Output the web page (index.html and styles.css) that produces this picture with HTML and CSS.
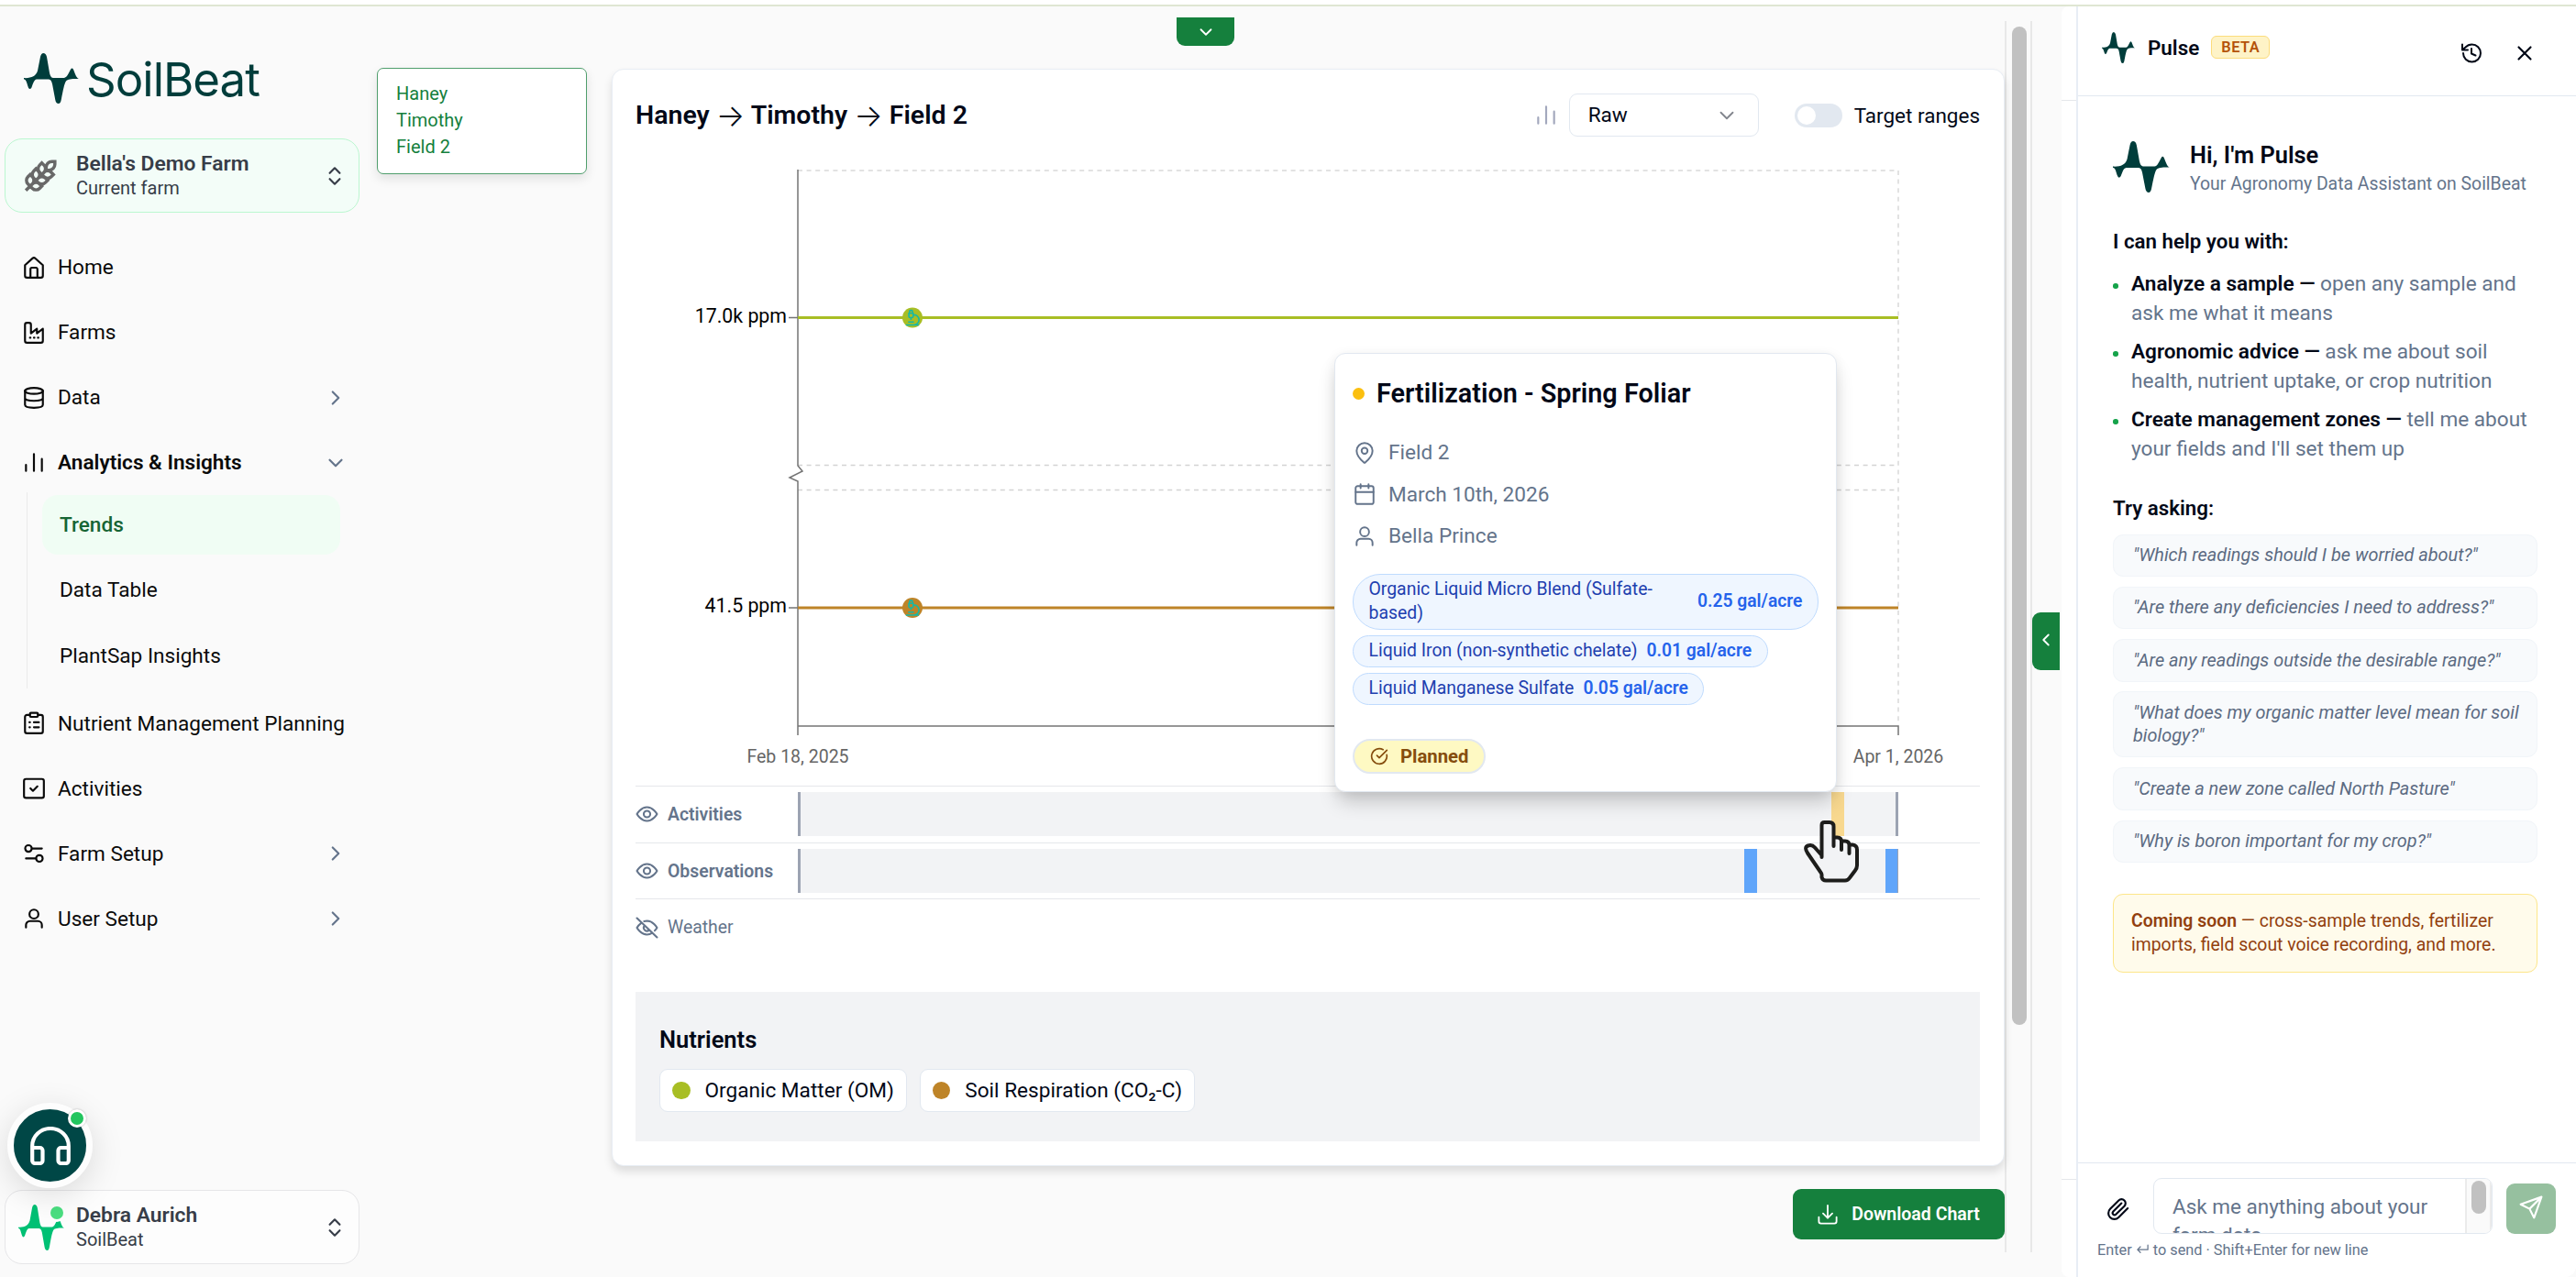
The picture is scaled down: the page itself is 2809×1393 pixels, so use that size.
FILE: index.html
```html
<!DOCTYPE html>
<html lang="en">
<head>
    <meta charset="UTF-8">
    <meta name="viewport" content="width=device-width, initial-scale=1.0">
    <title>SoilBeat - Trends</title>
    <link rel="stylesheet" href="styles.css">
</head>
<body>
    <!-- Shared shapes -->
    <svg class="defs" width="0" height="0">
        <symbol id="wave" viewBox="0 0 60 54" preserveAspectRatio="none">
            <path fill="currentColor" d="M0 26.6C8 27 13 25 15 19L18 4Q19 0 21.3 0Q24 0 25 4L28 21C29 25 30 26.5 33 26.5L44 26.5C47 26 48 23 51 17.5Q52.5 15 54 17.5C56 22 57 26.5 60 27.6C54 27.5 48 27.5 46 30C44 33 43 39 40.7 50Q40 54 37.8 54Q35 54 34.3 50L31 33C30 29 29 28 26 28L14 28C11 28.5 10 33 8.3 37Q6.5 39.5 5 37C3 32 3 28.5 0 27.8Z"/>
        </symbol>
        <symbol id="chevron-right" viewBox="0 0 24 24"><path d="m9 18 6-6-6-6"/></symbol>
        <symbol id="chevron-left" viewBox="0 0 24 24"><path d="m15 18-6-6 6-6"/></symbol>
        <symbol id="chevron-down" viewBox="0 0 24 24"><path d="m6 9 6 6 6-6"/></symbol>
        <symbol id="chevrons" viewBox="0 0 24 24"><path d="m7 15 5 5 5-5M7 9l5-5 5 5"/></symbol>
        <symbol id="bars" viewBox="0 0 24 24"><path d="M4 20v-6M12 20V3M20 20V8"/></symbol>
        <symbol id="user" viewBox="0 0 24 24"><circle cx="12" cy="7.5" r="4.5"/><path d="M4 21v-2.5a4 4 0 0 1 4-4h8a4 4 0 0 1 4 4V21"/></symbol>
        <symbol id="eye" viewBox="0 0 24 24"><path d="M1.500 12S5.500 4.800 12 4.800 22.500 12 22.500 12 18.500 19.200 12 19.200 1.500 12 1.500 12z"/><circle cx="12" cy="12" r="3.400"/></symbol>
        <symbol id="eye-off" viewBox="0 0 24 24"><path d="M9 5.300a11 11 0 0 1 3-.5C18.500 4.800 22.500 12 22.500 12a17 17 0 0 1-2.300 3M6 7A17 17 0 0 0 1.500 12S5.500 19.200 12 19.200a10 10 0 0 0 5.500-1.700M9.500 9.700a3.400 3.400 0 0 0 4.800 4.800M1.500 2 22.500 22"/></symbol>
        <symbol id="microscope" viewBox="0 0 24 24"><path d="M6 18h8M3 22h18M14 22a7 7 0 1 0 0-14h-1M9 14h2M9 12a2 2 0 0 1-2-2V6h6v4a2 2 0 0 1-2 2ZM12 6V3a1 1 0 0 0-1-1H9a1 1 0 0 0-1 1v3"/></symbol>
    </svg>

    <div class="app">
        <!-- Sidebar -->
        <aside class="sidebar">
            <div class="logo">
                <svg class="logo-mark"><use href="#wave"/></svg>
                <span class="logo-text">SoilBeat</span>
            </div>

            <div class="account farm">
                <svg class="wheat" viewBox="0 0 24 24"><path d="M2 22 16 8M3.500 12.500 5 11l1.500 1.500a3.500 3.500 0 0 1 0 5L5 19l-1.500-1.500a3.500 3.500 0 0 1 0-5ZM7.500 8.500 9 7l1.500 1.500a3.500 3.500 0 0 1 0 5L9 15l-1.500-1.500a3.500 3.500 0 0 1 0-5ZM11.500 4.500 13 3l1.500 1.500a3.500 3.500 0 0 1 0 5L13 11l-1.500-1.500a3.500 3.500 0 0 1 0-5ZM20 2h2v2a4 4 0 0 1-4 4h-2V6a4 4 0 0 1 4-4ZM11.500 17.500 13 19l-1.500 1.500a3.500 3.500 0 0 1-5 0L5 19l1.500-1.500a3.500 3.500 0 0 1 5 0ZM15.500 13.500 17 15l-1.500 1.500a3.500 3.500 0 0 1-5 0L9 15l1.500-1.500a3.500 3.500 0 0 1 5 0ZM19.500 9.500 21 11l-1.500 1.500a3.500 3.500 0 0 1-5 0L13 11l1.500-1.500a3.500 3.500 0 0 1 5 0Z"/></svg>
                <div class="account-text">
                    <strong>Bella's Demo Farm</strong>
                    <span>Current farm</span>
                </div>
                <svg class="icon chevrons"><use href="#chevrons"/></svg>
            </div>

            <nav class="nav">
                <a class="nav-item"><svg class="icon" viewBox="0 0 24 24"><path d="M3 9.500 10.500 2.700a2.200 2.200 0 0 1 3 0L21 9.500V20a2 2 0 0 1-2 2H5a2 2 0 0 1-2-2ZM8.500 22v-8.500a1.500 1.500 0 0 1 1.500-1.500h4a1.500 1.500 0 0 1 1.500 1.500V22"/></svg>Home</a>
                <a class="nav-item"><svg class="icon" viewBox="0 0 24 24"><path d="M3 20a2 2 0 0 0 2 2h14a2 2 0 0 0 2-2V8l-6 4.500V8l-6 4.500V4a2 2 0 0 0-2-2H5a2 2 0 0 0-2 2ZM8 17h.5M12 17h.5M16 17h.5"/></svg>Farms</a>
                <a class="nav-item"><svg class="icon" viewBox="0 0 24 24"><ellipse cx="12" cy="5" rx="9" ry="3"/><path d="M3 5v14c0 4 18 4 18 0V5M3 12c0 4 18 4 18 0"/></svg>Data<svg class="icon arrow"><use href="#chevron-right"/></svg></a>
                <a class="nav-item open"><svg class="icon"><use href="#bars"/></svg>Analytics &amp; Insights<svg class="icon arrow"><use href="#chevron-down"/></svg></a>
                <div class="subnav">
                    <a class="sub-item active">Trends</a>
                    <a class="sub-item">Data Table</a>
                    <a class="sub-item">PlantSap Insights</a>
                </div>
                <a class="nav-item"><svg class="icon" viewBox="0 0 24 24"><rect x="8" y="1.500" width="8" height="4" rx="1"/><path d="M16 3.500h3a2 2 0 0 1 2 2V20a2 2 0 0 1-2 2H5a2 2 0 0 1-2-2V5.500a2 2 0 0 1 2-2h3M12 11h5M12 16h5M7.500 11h.5M7.500 16h.5"/></svg>Nutrient Management Planning</a>
                <a class="nav-item"><svg class="icon" viewBox="0 0 24 24"><rect x="2" y="2.500" width="20" height="19" rx="2"/><path d="m8.500 12 2.500 2.500 4.500-4.500"/></svg>Activities</a>
                <a class="nav-item"><svg class="icon" viewBox="0 0 24 24"><path d="M10 7h10M4 17h10"/><circle cx="6.500" cy="7" r="3.300"/><circle cx="17.500" cy="17" r="3.300"/></svg>Farm Setup<svg class="icon arrow"><use href="#chevron-right"/></svg></a>
                <a class="nav-item"><svg class="icon"><use href="#user"/></svg>User Setup<svg class="icon arrow"><use href="#chevron-right"/></svg></a>
            </nav>

            <div class="account profile">
                <div class="avatar">
                    <svg><use href="#wave"/></svg>
                    <span class="avatar-dot"></span>
                </div>
                <div class="account-text">
                    <strong>Debra Aurich</strong>
                    <span>SoilBeat</span>
                </div>
                <svg class="icon chevrons"><use href="#chevrons"/></svg>
            </div>

            <!-- Support button -->
            <div class="support">
                <svg viewBox="0 0 44 42"><path d="M2.200 37V21a19.800 19 0 0 1 39.600 0v16M2.200 23h8.300a3 3 0 0 1 3 3v11a3 3 0 0 1-3 3H5a3 3 0 0 1-2.800-3ZM41.800 23h-8.300a3 3 0 0 0-3 3v11a3 3 0 0 0 3 3H39a3 3 0 0 0 2.800-3Z"/></svg>
                <span class="support-dot"></span>
            </div>
        </aside>

        <!-- Selected path -->
        <div class="path-box">
            <div>Haney</div>
            <div>Timothy</div>
            <div>Field 2</div>
        </div>

        <main class="main">
            <button class="tab-down"><svg class="icon"><use href="#chevron-down"/></svg></button>

            <section class="card">
                <header class="card-header">
                    <h1>Haney <span class="to">→</span> Timothy <span class="to">→</span> Field 2</h1>
                    <svg class="icon bars-icon"><use href="#bars"/></svg>
                    <div class="select">Raw<svg class="icon"><use href="#chevron-down"/></svg></div>
                    <span class="toggle"></span>
                    <span class="toggle-label">Target ranges</span>
                </header>

                <svg class="chart" viewBox="693 160 1466 697">
                    <g class="grid">
                        <path class="dash-light" d="M870 186H2070"/>
                        <path d="M2070 186V791"/>
                        <path d="M870 507.500H2070M870 534.500H2070"/>
                    </g>
                    <path class="axis" d="M870 185V508L875 514 861 521 870 525V802M870 792H2070V802M860 346.500H870M860 663H870"/>
                    <path class="line-om" d="M870 346.500H2070"/>
                    <path class="line-resp" d="M870 663H2070"/>
                    <circle class="dot-om" cx="995" cy="346.500" r="11"/>
                    <circle class="dot-resp" cx="995" cy="663" r="11"/>
                    <use class="micro" href="#microscope" x="985.500" y="337" width="19" height="19"/>
                    <use class="micro" href="#microscope" x="985.500" y="653.500" width="19" height="19"/>
                    <text class="y-label" x="858" y="351.500">17.0k ppm</text>
                    <text class="y-label" x="858" y="668">41.5 ppm</text>
                    <text class="x-label" x="870" y="831.500">Feb 18, 2025</text>
                    <text class="x-label" x="2070" y="831.500">Apr 1, 2026</text>
                </svg>

                <div class="track on">
                    <svg class="icon"><use href="#eye"/></svg>
                    <span class="track-name">Activities</span>
                    <div class="bar ends"><i class="mark yellow"></i></div>
                </div>
                <div class="track on">
                    <svg class="icon"><use href="#eye"/></svg>
                    <span class="track-name">Observations</span>
                    <div class="bar ends"><i class="mark blue first"></i><i class="mark blue last"></i></div>
                </div>
                <div class="track">
                    <svg class="icon"><use href="#eye-off"/></svg>
                    <span class="track-name">Weather</span>
                </div>

                <div class="nutrients">
                    <h2>Nutrients</h2>
                    <div class="chips">
                        <span class="chip"><i class="om"></i>Organic Matter (OM)</span>
                        <span class="chip"><i class="resp"></i>Soil Respiration (CO₂-C)</span>
                    </div>
                </div>

                <!-- Activity details -->
                <div class="popover">
                    <h3><i></i>Fertilization - Spring Foliar</h3>
                    <div class="info"><svg class="icon" viewBox="0 0 24 24"><path d="M20 10c0 5-5.500 10.200-7.400 11.800a1 1 0 0 1-1.200 0C9.500 20.200 4 15 4 10a8 8 0 0 1 16 0"/><circle cx="12" cy="10" r="3"/></svg>Field 2</div>
                    <div class="info"><svg class="icon" viewBox="0 0 24 24"><rect x="3" y="4" width="18" height="18" rx="2"/><path d="M8 2v4M16 2v4M3 10h18"/></svg>March 10th, 2026</div>
                    <div class="info"><svg class="icon"><use href="#user"/></svg>Bella Prince</div>
                    <div class="products">
                        <div class="product"><span>Organic Liquid Micro Blend (Sulfate-based)</span><b>0.25 gal/acre</b></div>
                        <div class="product"><span>Liquid Iron (non-synthetic chelate)</span><b>0.01 gal/acre</b></div>
                        <div class="product"><span>Liquid Manganese Sulfate</span><b>0.05 gal/acre</b></div>
                    </div>
                    <span class="status"><svg class="icon" viewBox="0 0 24 24"><path d="M21.800 10A10 10 0 1 1 17 3.300M9 11l3 3L22 4"/></svg>Planned</span>
                </div>

                <svg class="pointer" viewBox="0 0 60 68"><path d="M19.500 40V5Q19.500 2 22.500 2H28Q32.500 2 32.500 6.500V28V18.500H36.500Q41 18.500 41 23V32V22.500H45Q49.500 22.500 49.500 27V36V26.500H53Q58 27 58 32V49Q58 52 56 54.500L50 62.500Q48 65.500 45 65.500H24Q20.500 65.500 19.500 62V59Q19.500 58 18 56L4 35.500Q0 29 4.500 27.500Q9 26 12 29.500L19.500 38"/></svg>
            </section>

            <button class="download"><svg class="icon" viewBox="0 0 24 24"><path d="M1.500 15v5a2.500 2.500 0 0 0 2.500 2.500h16a2.500 2.500 0 0 0 2.500-2.500v-5M6.500 10.500 12 16l5.500-5.500M12 16V1"/></svg>Download Chart</button>
        </main>

        <div class="scrollbar"><span></span></div>
        <div class="gutter"><button class="tab-left"><svg class="icon"><use href="#chevron-left"/></svg></button></div>
        <div class="drawer-edge"><span></span></div>

        <!-- Assistant panel -->
        <aside class="pulse">
            <header class="pulse-header">
                <svg class="pulse-mark"><use href="#wave"/></svg>
                <span class="pulse-name">Pulse</span>
                <span class="beta">BETA</span>
                <svg class="icon history" viewBox="0 0 24 24"><path d="M3 12a9.500 9.500 0 1 0 9.500-9.500A10 10 0 0 0 5.500 5.500L2 8.500M2 2.500v6h6M12 7v5.500l4.500 2"/></svg>
                <svg class="icon close" viewBox="0 0 24 24"><path d="M18 6 6 18M6 6l12 12"/></svg>
            </header>

            <div class="pulse-body">
                <div class="hello">
                    <svg><use href="#wave"/></svg>
                    <div>
                        <h2>Hi, I'm Pulse</h2>
                        <p>Your Agronomy Data Assistant on SoilBeat</p>
                    </div>
                </div>
                <h4>I can help you with:</h4>
                <ul class="skills">
                    <li><b>Analyze a sample —</b> open any sample and ask me what it means</li>
                    <li><b>Agronomic advice —</b> ask me about soil health, nutrient uptake, or crop nutrition</li>
                    <li><b>Create management zones —</b> tell me about your fields and I'll set them up</li>
                </ul>
                <h4>Try asking:</h4>
                <div class="prompts">
                    <div>"Which readings should I be worried about?"</div>
                    <div>"Are there any deficiencies I need to address?"</div>
                    <div>"Are any readings outside the desirable range?"</div>
                    <div>"What does my organic matter level mean for soil biology?"</div>
                    <div>"Create a new zone called North Pasture"</div>
                    <div>"Why is boron important for my crop?"</div>
                </div>
                <div class="soon"><b>Coming soon</b> — cross-sample trends, fertilizer imports, field scout voice recording, and more.</div>
            </div>

            <footer class="pulse-footer">
                <div class="composer">
                    <svg class="icon clip" viewBox="0 0 24 24"><path d="m21.400 11.100-9.200 9.200a6 6 0 0 1-8.500-8.500l8.600-8.600a4 4 0 1 1 5.700 5.700l-8.600 8.500a2 2 0 0 1-2.800-2.800l8.500-8.500"/></svg>
                    <div class="ask">
                        <div class="ask-text">Ask me anything about your farm data</div>
                        <div class="ask-scroll"><span></span></div>
                    </div>
                    <button class="send"><svg class="icon" viewBox="0 0 24 24"><path d="M22.500 1.500 1.500 9l9 4.500L15 22.500ZM22.500 1.500l-12 12"/></svg></button>
                </div>
                <p class="hint">Enter <svg class="icon" viewBox="0 0 24 24"><path d="M21 5v8H3M8 8l-5 5 5 5"/></svg> to send · Shift+Enter for new line</p>
            </footer>
        </aside>
    </div>
</body>
</html>
```

FILE: styles.css
```css
* {
    box-sizing: border-box;
}

body {
    margin: 0;
    font-family: Roboto, "Liberation Sans", sans-serif;
    font-size: 22.6px;
    color: #020817;
    background-color: #fff;
    overflow: hidden;
}

h1, h2, h3, h4, p, ul {
    margin: 0;
    padding: 0;
    font-weight: 600;
}

button {
    border: none;
    padding: 0;
    font-family: inherit;
    color: #fff;
    background-color: #15803d;
}

.defs {
    display: block;
}

.icon {
    width: 26px;
    height: 26px;
    flex: none;
    fill: none;
    stroke: currentColor;
    stroke-width: 2;
    stroke-linecap: round;
    stroke-linejoin: round;
}

.app {
    display: flex;
    height: 1388px;
    margin-top: 5px;
    border-top: 2px solid #dfe6d3;
    background-color: #fafafa;
}

/* Sidebar */
.sidebar {
    position: relative;
    width: 411px;
    flex: none;
    padding: 0 19px 0 5px;
    display: flex;
    flex-direction: column;
}

.logo {
    height: 144px;
    padding: 51px 0 0 21px;
    display: flex;
    color: #003d3b;
}

.logo-mark {
    width: 60px;
    height: 55px;
}

.logo-text {
    margin-left: 8px;
    font-family: Inter, sans-serif;
    font-size: 51px;
    line-height: 57px;
    letter-spacing: -1px;
}

.account {
    width: 387px;
    height: 81px;
    flex: none;
    display: flex;
    align-items: center;
    border: 1px solid #e6e6e8;
    border-radius: 19px;
    background-color: #fdfdfd;
    color: #373d48;
}

.farm {
    border-color: #bbf7d0;
    background-color: #f3fdf8;
}

.wheat {
    width: 38px;
    height: 38px;
    margin: 0 20px 0 19px;
    fill: none;
    stroke: #686868;
    stroke-width: 2.2;
}

.account-text {
    flex: 1;
    display: flex;
    flex-direction: column;
    padding-top: 1px;
    line-height: 26px;
}

.account-text strong {
    font-weight: 600;
    font-size: 22.8px;
}

.account-text span {
    font-size: 20px;
}

.chevrons {
    margin-right: 13px;
}

.nav {
    margin-top: 27px;
    flex: 1;
    display: flex;
    flex-direction: column;
    gap: 6.1px;
    color: #0a0a0a;
}

.nav-item {
    height: 65px;
    flex: none;
    padding: 0 13px 0 19px;
    display: flex;
    align-items: center;
    gap: 13px;
    white-space: nowrap;
}

.nav-item.open {
    font-weight: 600;
    margin-bottom: -6px;
}

.arrow {
    margin-left: auto;
    color: #64748b;
}

.subnav {
    margin-left: 24px;
    width: 342px;
    padding: 3px 0 3px 16px;
    border-left: 1.5px solid #ebebeb;
    display: flex;
    flex-direction: column;
    gap: 6.1px;
}

.sub-item {
    height: 65px;
    padding-left: 19px;
    line-height: 65px;
    border-radius: 17px;
}

.sub-item.active {
    background-color: #f0fdf4;
    color: #166534;
    font-weight: 500;
}

.profile {
    margin-bottom: 14px;
}

.avatar {
    position: relative;
    width: 50px;
    height: 50px;
    margin: 0 13px 0 14px;
    color: #00c074;
}

.avatar svg {
    width: 50px;
    height: 50px;
}

.avatar-dot {
    position: absolute;
    top: 2px;
    right: 1px;
    width: 14px;
    height: 14px;
    border-radius: 50%;
    background-color: #4ade80;
    box-shadow: 0 0 0 3px #fdfdfd;
}

.support {
    position: absolute;
    left: 8px;
    top: 1196px;
    width: 93px;
    height: 93px;
    border: 7.5px solid #fdfdfd;
    border-radius: 50%;
    background-color: #004746;
    box-shadow: 0 8px 36px rgba(0, 0, 0, 0.13);
    display: flex;
    align-items: center;
    justify-content: center;
}

.support svg {
    width: 44px;
    height: 42px;
    fill: none;
    stroke: #fff;
    stroke-width: 4.2;
}

.support-dot {
    position: absolute;
    top: 0;
    right: 0;
    width: 20px;
    height: 20px;
    border: 3px solid #fff;
    border-radius: 50%;
    background-color: #22c55e;
    box-shadow: 0 0 2px rgba(0, 0, 0, 0.3);
}

.path-box {
    width: 229px;
    height: 116px;
    margin-top: 67px;
    padding: 13px 20px;
    border: 1.5px solid #4f9e6c;
    border-radius: 7px;
    background-color: #fff;
    box-shadow: 0 5px 12px rgba(0, 0, 0, 0.1);
    color: #15803d;
    font-size: 20px;
    line-height: 29.2px;
}

/* Main column */
.main {
    position: relative;
    width: 1519px;
    flex: none;
    margin-left: 27px;
    padding-top: 68px;
}

.tab-down {
    position: absolute;
    left: 616px;
    top: 12px;
    width: 63px;
    height: 31px;
    border-radius: 0 0 9px 9px;
}

.tab-down .icon {
    width: 22px;
    height: 22px;
    margin-top: 3px;
}

.card {
    position: relative;
    height: 1197px;
    padding: 26px 26px 0 25px;
    border: 1.5px solid #e8edf4;
    border-radius: 13px;
    background-color: #fff;
    box-shadow: 0 6px 10px rgba(0, 0, 0, 0.12);
}

.card-header {
    display: flex;
    align-items: center;
    height: 47px;
}

h1 {
    margin: 0 auto 0 0;
    font-size: 28.5px;
    line-height: 40px;
}

.to {
    font-family: Inter, sans-serif;
    font-size: 33px;
    font-weight: 300;
    line-height: 20px;
    vertical-align: -3px;
}

.bars-icon {
    margin-right: 12px;
    color: #a3a8bd;
}

.select {
    width: 207px;
    height: 47px;
    padding: 0 21px 0 20px;
    display: flex;
    align-items: center;
    justify-content: space-between;
    border: 1.5px solid #e2e8f0;
    border-radius: 9px;
}

.select .icon {
    color: #82858d;
    stroke-width: 1.7;
}

.toggle {
    width: 52px;
    height: 26px;
    margin: 0 13px 0 39px;
    padding: 3px;
    border-radius: 13px;
    background-color: #e2e8f0;
}

.toggle::before {
    content: "";
    display: block;
    width: 20px;
    height: 20px;
    border-radius: 50%;
    background-color: #fff;
}

.toggle-label {
    font-size: 22.5px;
}

.chart {
    display: block;
    width: 1466px;
    height: 697px;
    margin-top: 11px;
}

.grid path {
    fill: none;
    stroke: #d3d3d3;
    stroke-width: 1.3;
    stroke-dasharray: 5 4.6;
}

.grid .dash-light {
    stroke: #e2e2e2;
    stroke-width: 1.8;
}

.axis {
    fill: none;
    stroke: #747474;
    stroke-width: 1.5;
}

.line-om {
    stroke: #a8be24;
    stroke-width: 3.2;
}

.line-resp {
    stroke: #be8428;
    stroke-width: 3.2;
}

.dot-om {
    fill: #a8be24;
}

.dot-resp {
    fill: #be8428;
}

.micro {
    fill: none;
    stroke: #14b8a6;
    stroke-width: 2;
}

.y-label {
    font-size: 21.3px;
    text-anchor: end;
}

.x-label {
    font-size: 19.5px;
    fill: #666;
    text-anchor: middle;
}

.track {
    height: 61.7px;
    border-top: 1.4px solid #e5e7eb;
    display: flex;
    align-items: center;
    color: #64748b;
    font-size: 19.4px;
}

.track .icon {
    width: 25px;
    margin-right: 10px;
}

.track-name {
    width: 142px;
}

.on .track-name {
    font-weight: 600;
}

.bar {
    position: relative;
    width: 1200px;
    height: 48px;
    border: solid #9ca3b2;
    border-width: 0 3px;
    background-color: #f2f3f5;
}

.mark {
    position: absolute;
    top: 0;
    width: 13.5px;
    height: 48px;
}

.yellow {
    left: 1124px;
    background-color: #f8d88f;
}

.blue {
    background-color: #60a5fa;
}

.first {
    left: 1029px;
}

.last {
    left: 1182.5px;
}

.nutrients {
    height: 163px;
    margin-top: 40px;
    padding: 37px 26px;
    background-color: #f2f3f5;
}

.nutrients h2 {
    font-size: 25.5px;
    line-height: 30px;
}

.chips {
    display: flex;
    gap: 14px;
    margin-top: 17px;
}

.chip {
    height: 47px;
    padding: 0 13px;
    display: flex;
    align-items: center;
    border: 1px solid #e2e8f0;
    border-radius: 9px;
    background-color: #fff;
}

.chip i {
    width: 19.5px;
    height: 19.5px;
    margin-right: 16px;
    border-radius: 50%;
}

.om {
    background-color: #a8be24;
}

.resp {
    background-color: #be8428;
}

/* Activity popover */
.popover {
    position: absolute;
    left: 787px;
    top: 309px;
    width: 548px;
    height: 479px;
    padding: 25px 19px;
    border: 1.5px solid #e2e8f0;
    border-radius: 12px;
    background-color: #fff;
    box-shadow: 0 14px 22px -4px rgba(0, 0, 0, 0.2), 0 2px 14px rgba(0, 0, 0, 0.06);
}

h3 {
    display: flex;
    align-items: center;
    font-size: 28.8px;
    line-height: 36px;
    margin-bottom: 24px;
}

h3 i {
    width: 13px;
    height: 13px;
    margin-right: 13px;
    border-radius: 50%;
    background-color: #fbbf0f;
}

.info {
    height: 45.5px;
    display: flex;
    align-items: center;
    gap: 13px;
    color: #64748b;
}

.info .icon {
    stroke-width: 1.8;
}

.products {
    margin-top: 18px;
    display: flex;
    flex-direction: column;
    align-items: flex-start;
    gap: 6px;
}

.product {
    display: flex;
    align-items: center;
    gap: 10px;
    padding: 3.5px 16.5px;
    border: 1.4px solid #bfdbfe;
    border-radius: 30px;
    background-color: #eff6ff;
    color: #1e40af;
    font-size: 19.4px;
    line-height: 26px;
}

.product b {
    font-weight: 600;
    font-size: 19.3px;
    white-space: nowrap;
    color: #2563eb;
}

.status {
    display: inline-flex;
    align-items: center;
    height: 38px;
    margin-top: 37px;
    padding: 0 17px 0 17px;
    gap: 13px;
    border: 2.5px solid #e2e8f0;
    border-radius: 19px;
    background-color: #fef9c3;
    color: #854d0e;
    font-size: 20.3px;
    font-weight: 700;
}

.status .icon {
    width: 20px;
    height: 20px;
}

.pointer {
    position: absolute;
    left: 1299px;
    top: 819px;
    width: 60px;
    height: 68px;
    fill: #f2f3f5;
    stroke: #1d1d1b;
    stroke-width: 4;
    stroke-linejoin: round;
    stroke-linecap: round;
}

.download {
    width: 231px;
    height: 55px;
    margin: 25px 0 0 auto;
    display: flex;
    align-items: center;
    justify-content: center;
    gap: 15px;
    border-radius: 9px;
    font-size: 19.5px;
    font-weight: 600;
}

.download .icon {
    width: 22px;
    height: 22px;
}

/* Scroll column and drawer edge */
.scrollbar {
    width: 30px;
    height: 1343px;
    flex: none;
    margin-top: 16px;
    padding: 6px 6px;
    border: solid #e8e8e8;
    border-width: 0 2px;
}

.scrollbar span {
    display: block;
    width: 16px;
    height: 1089px;
    border-radius: 8px;
    background-color: #c1c1c1;
}

.gutter {
    width: 32px;
    flex: none;
    padding-top: 661px;
}

.tab-left {
    display: block;
    width: 30px;
    height: 63px;
    border-radius: 9px 0 0 9px;
}

.tab-left .icon {
    width: 22px;
    height: 22px;
}

.drawer-edge {
    width: 16px;
    flex: none;
    padding-top: 102px;
    background-color: #fff;
    border-radius: 8px 0 0 8px;
}

.drawer-edge span {
    display: block;
    height: 1178px;
    border: solid #e5e7eb;
    border-width: 1px 0;
}

/* Assistant panel */
.pulse {
    flex: 1;
    display: flex;
    flex-direction: column;
    border-left: 2px solid #e8edf5;
    background-color: #fff;
    border-bottom-right-radius: 12px;
}

.pulse-header {
    height: 98px;
    padding: 0 43px 8px 26px;
    display: flex;
    align-items: center;
    border-bottom: 1px solid #e2e8f0;
}

.pulse-mark {
    width: 36px;
    height: 34px;
    color: #003d3b;
}

.pulse-name {
    margin: 0 13px 0 14px;
    font-weight: 600;
    font-size: 22.4px;
}

.beta {
    height: 25px;
    margin-right: auto;
    padding: 0 10px;
    border: 1.5px solid #fcdc7c;
    border-radius: 6px;
    background-color: #fef3c7;
    color: #b45309;
    font-size: 16.4px;
    font-weight: 600;
    line-height: 23px;
    letter-spacing: 0.5px;
}

.history,
.close {
    margin-top: 12px;
}

.history {
    width: 24px;
    height: 24px;
    margin-right: 33px;
}

.pulse-body {
    flex: 1;
    padding: 46px 42px 0 38px;
}

.hello {
    display: flex;
    gap: 22px;
}

.hello svg {
    width: 62px;
    height: 56px;
    margin-top: 3px;
    color: #003d3b;
}

.hello h2 {
    font-size: 25.4px;
    line-height: 36px;
}

.hello p {
    font-size: 19.4px;
    font-weight: 400;
    line-height: 27px;
    color: #64748b;
    white-space: nowrap;
}

h4 {
    font-weight: 600;
    font-size: 22.3px;
    line-height: 32px;
}

.hello + h4 {
    margin-top: 33px;
}

.skills {
    margin: 15px 0 31px;
    list-style: none;
    line-height: 32.2px;
    font-weight: 400;
    color: #64748b;
}

.skills li {
    position: relative;
    padding-left: 20px;
    margin-bottom: 9.7px;
}

.skills li::before {
    content: "";
    position: absolute;
    left: 0;
    top: 15px;
    width: 5.5px;
    height: 5.5px;
    border-radius: 50%;
    background-color: #16a34a;
}

.skills b {
    font-weight: 600;
    color: #020817;
}

.prompts {
    margin: 13px 0 34px;
    display: flex;
    flex-direction: column;
    gap: 10.9px;
}

.prompts div {
    padding: 9.4px 14px 9.4px 21px;
    border: 1px solid #f1f5f9;
    border-radius: 11px;
    background-color: #f8fafc;
    color: #5c6b82;
    font-size: 19.9px;
    font-style: italic;
    line-height: 25.6px;
}

.soon {
    padding: 16.5px 19px;
    border: 1.5px solid #fde68a;
    border-radius: 11px;
    background-color: #fffbeb;
    color: #92400e;
    font-size: 19.4px;
    line-height: 25.5px;
}

.soon b {
    font-weight: 600;
}

.pulse-footer {
    height: 125px;
    padding: 16px 22px 0 21px;
    border-top: 1px solid #e2e8f0;
}

.composer {
    display: flex;
    align-items: flex-end;
}

.clip {
    margin: 0 25px 14px 10px;
}

.ask {
    width: 370px;
    height: 61px;
    display: flex;
    border: 1.5px solid #e2e8f0;
    border-radius: 9px;
    overflow: hidden;
    color: #64748b;
}

.ask-text {
    flex: 1;
    padding: 15px 20px;
    font-size: 22.5px;
    line-height: 31px;
}

.ask-scroll {
    width: 29px;
    padding: 2px 5px;
    border: solid #ebebeb;
    border-width: 0 2px;
    background-color: #fafafa;
}

.ask-scroll span {
    display: block;
    width: 16px;
    height: 36px;
    border-radius: 8px;
    background-color: #c1c1c1;
}

.send {
    width: 54px;
    height: 55px;
    margin-left: 15px;
    border-radius: 9px;
    background-color: #96c09f;
}

.hint {
    margin-top: 6px;
    font-size: 16.3px;
    font-weight: 400;
    line-height: 24px;
    color: #64748b;
}

.hint .icon {
    width: 15px;
    height: 15px;
    vertical-align: -1px;
}
```
